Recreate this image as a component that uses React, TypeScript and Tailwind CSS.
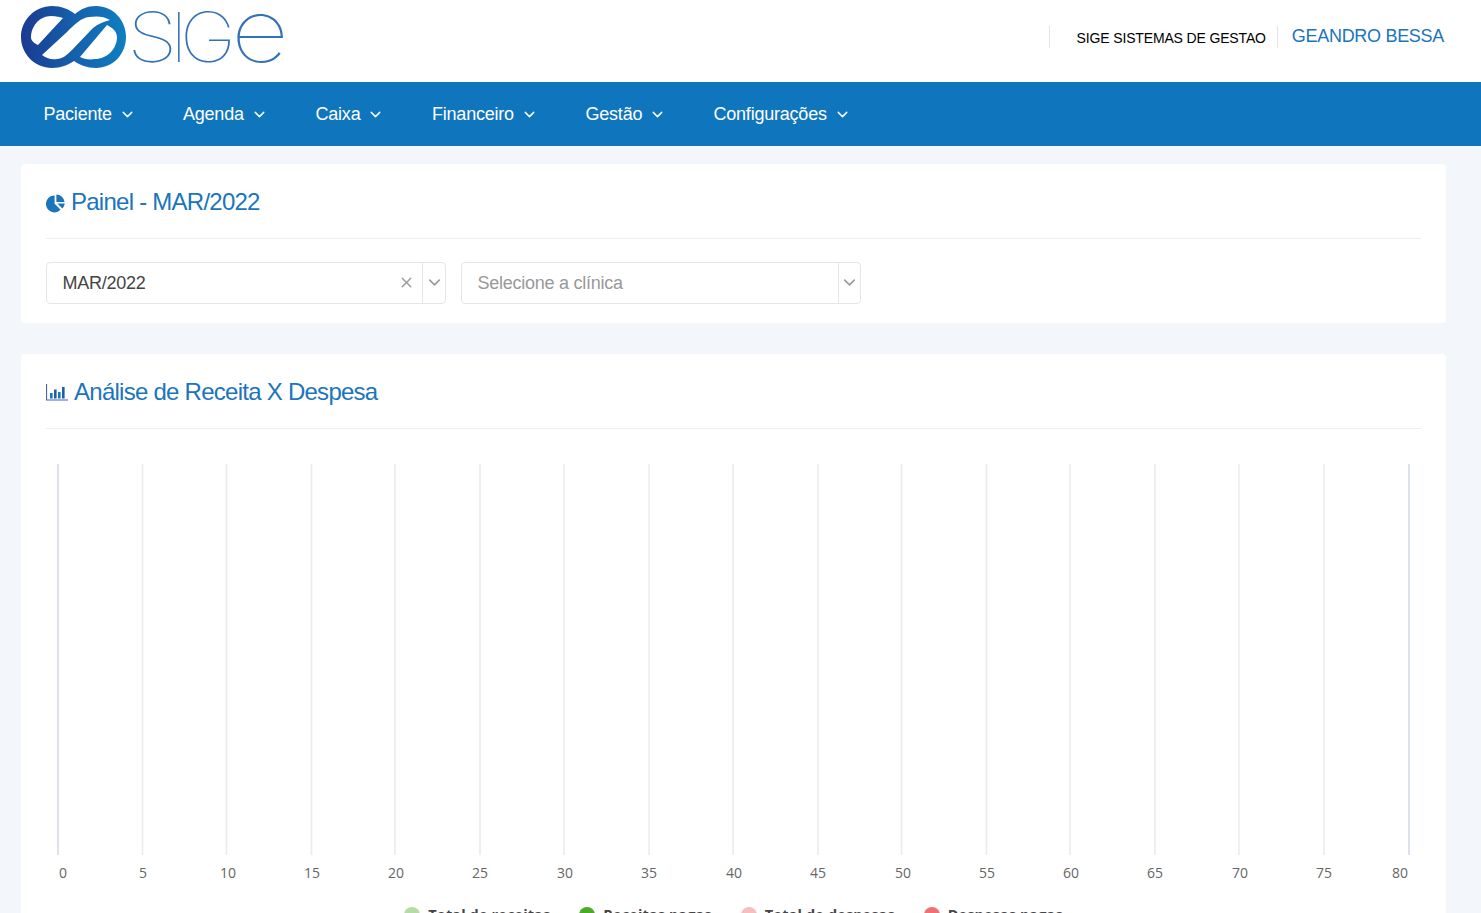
import { ChevronDown, X } from 'lucide-react'

const menuItems = [
  { label: 'Paciente', width: 'w-[139.5px]' },
  { label: 'Agenda', width: 'w-[132.5px]' },
  { label: 'Caixa', width: 'w-[116.5px]' },
  { label: 'Financeiro', width: 'w-[153.5px]' },
  { label: 'Gestão', width: 'w-[128px]' },
  { label: 'Configurações', width: 'w-[160px]' }
]

const gridLines = [58, 142.5, 226.5, 311.5, 395, 480, 564, 649, 733, 818, 901.5, 986.5, 1070, 1155, 1239, 1324, 1409]
const tickLabels = [63, 143, 228, 312, 396, 480, 565, 649, 734, 818, 903, 987, 1071, 1155, 1240, 1324, 1400]

const legend = [
  { label: 'Total de receitas', color: 'bg-[#b5dca5]' },
  { label: 'Receitas pagas', color: 'bg-[#4aab26]' },
  { label: 'Total de despesas', color: 'bg-[#f5bfc0]' },
  { label: 'Despesas pagas', color: 'bg-[#f07172]' }
]

function LogoMark() {
  return (
    <svg width="106" height="64" viewBox="0 0 106 64" fill="none" className="shrink-0">
      <defs>
        <linearGradient id="logoGrad" x1="0" y1="0" x2="106" y2="0" gradientUnits="userSpaceOnUse">
          <stop offset="0" stopColor="#1b3a90" />
          <stop offset="0.5" stopColor="#1560ac" />
          <stop offset="1" stopColor="#0f7fc2" />
        </linearGradient>
      </defs>
      <path
        fill="url(#logoGrad)"
        d="M31 1 C40 1 48 4 54 9 C60 4 66 1 75 1 C92 1 105 15 105 32 C105 49 92 63 75 63 C66 63 59 60 53 56 C47 60 40 63 31 63 C14 63 0 49 0 32 C0 15 14 1 31 1 Z"
      />
      <path fill="#fff" d="M10 32 C10 22 18 11 30 11 C35 11 39 12 42 13 L17 40 C13 38 10 36 10 32 Z" />
      <path
        fill="#fff"
        d="M21 50 L46 27 C54 19 60 13 68 12 C75 11 83 11 89 15 C82 17 77 19 72 23 L51 45 C46 50 41 54 36 54 C30 55 25 53 21 50 Z"
      />
      <path fill="#fff" d="M59 52 L86 20 C92 23 96 27 96 32 C96 44 86 54 74 54 C68 55 63 54 59 52 Z" />
    </svg>
  )
}

function PieIcon() {
  return (
    <svg width="20" height="20" viewBox="0 0 20 20" className="mt-[2px] shrink-0 text-[#1a75bc]" fill="currentColor">
      <path d="M8.6 2.4 V10.8 L14.6 16.8 A8.5 8.5 0 1 1 8.6 2.4 Z" />
      <path d="M10.4 1.6 A8.4 8.4 0 0 1 18.6 9 L10.4 9 Z" />
      <path d="M11.4 10.6 L18.8 10.6 A8.4 8.4 0 0 1 16.4 15.6 Z" />
    </svg>
  )
}

function BarsIcon() {
  return (
    <svg width="22" height="17" viewBox="0 0 22 17" className="mt-[1px] shrink-0" fill="none">
      <path d="M0.5 0 V16 H22" stroke="#4a62b8" strokeWidth="1.2" />
      <rect x="4" y="9" width="2.6" height="5.5" fill="#1a75bc" />
      <rect x="8" y="5.5" width="2.6" height="9" fill="#1a5fa8" />
      <rect x="12" y="8" width="2.6" height="6.5" fill="#1a75bc" />
      <rect x="16" y="3" width="2.6" height="11.5" fill="#1a5fa8" />
    </svg>
  )
}

function ChartGrid() {
  return (
    <svg width="1425" height="432" viewBox="21 456 1425 432" className="block -mx-[25px]">
      {gridLines.map((x, i) => (
        <line
          key={x}
          x1={x}
          x2={x}
          y1={464}
          y2={855}
          stroke={i === 0 || i === gridLines.length - 1 ? '#d5daea' : '#e9ebf0'}
          strokeWidth="1.6"
        />
      ))}
      {tickLabels.map((x, i) => (
        <text
          key={x}
          x={x}
          y={878}
          textAnchor="middle"
          fontSize="14"
          fill="#666666"
          fontFamily="'Open Sans', sans-serif"
        >
          {i * 5}
        </text>
      ))}
    </svg>
  )
}

function SelectBox({ value, placeholder, clearable }: { value?: string; placeholder?: string; clearable?: boolean }) {
  return (
    <div className="flex h-[42px] w-[400px] items-stretch rounded border border-[#e4e6ea] bg-white">
      <div
        className={`flex flex-1 items-center pl-[15.5px] text-[18px] tracking-[-0.25px] ${
          value ? 'text-[#444444]' : 'text-[#999999]'
        }`}
      >
        {value ?? placeholder}
      </div>
      {clearable && (
        <div className="flex w-[31px] items-center justify-center pb-[2px]">
          <X className="h-[17px] w-[17px] text-[#9a9a9a]" strokeWidth={2} />
        </div>
      )}
      <div
        className={`flex items-center justify-center border-l border-[#e4e6ea] pb-[2px] ${
          clearable ? 'w-[23px]' : 'w-[22px]'
        }`}
      >
        <ChevronDown className="h-[19px] w-[19px] text-[#9a9a9a]" strokeWidth={2} />
      </div>
    </div>
  )
}

export default function App() {
  return (
    <div className="h-[913px] overflow-hidden bg-[#f3f6fb] font-['Liberation_Sans',Arial,sans-serif]">
      <header className="flex h-[82px] items-start justify-between bg-white pl-[21px] pr-[37px]">
        <div className="flex items-start pt-[5px]">
          <LogoMark />
          <div className="-mt-[7px] flex h-[64px] items-baseline font-['Inter',sans-serif] font-thin leading-[64px] text-[#3471bb]">
            <span className="inline-block origin-left scale-x-[1.2] text-[69px]">S</span>
            <span className="-mr-[7px] ml-[1px] inline-block text-[69px]">I</span>
            <span className="inline-block origin-left scale-x-[1.1] text-[69px]">G</span>
            <span className="inline-block origin-left scale-x-[1.15] text-[88px]">e</span>
          </div>
        </div>
        <div className="flex items-center pt-[26px]">
          <div className="flex h-[22px] items-center border-l border-[#e3e3e3] pl-[27px] pr-[11px] pt-[3px] text-[14px] tracking-[-0.15px] text-black">
            SIGE SISTEMAS DE GESTAO
          </div>
          <div className="flex h-[22px] items-center border-l border-[#e3e3e3] pb-[1px] pl-[14px] text-[18px] tracking-[-0.3px] text-[#1a75bc]">
            GEANDRO BESSA
          </div>
        </div>
      </header>

      <nav className="flex h-[64px] items-center bg-[#0f75bc] pl-[43.5px]">
        {menuItems.map(item => (
          <div key={item.label} className={`flex items-center text-[18px] tracking-[-0.22px] text-white ${item.width}`}>
            {item.label}
            <ChevronDown className="ml-[7px] h-[17px] w-[17px]" strokeWidth={2} />
          </div>
        ))}
      </nav>

      <main className="flex flex-col gap-[31px] pl-[21px] pr-[35px] pt-[18px]">
        <section className="h-[159px] rounded bg-white px-[25px]">
          <div className="flex h-[75px] items-center gap-[5px] border-b border-[#eceef2] pt-[2px] text-[24px] tracking-[-0.75px] text-[#1a75bc]">
            <PieIcon />
            Painel - MAR/2022
          </div>
          <div className="flex gap-[15px] pt-[23px]">
            <SelectBox value="MAR/2022" clearable />
            <SelectBox placeholder="Selecione a clínica" />
          </div>
        </section>

        <section className="rounded bg-white px-[25px]">
          <div className="flex h-[75px] items-center gap-[6px] border-b border-[#eceef2] pt-[2px] text-[24px] tracking-[-0.74px] text-[#1a75bc]">
            <BarsIcon />
            Análise de Receita X Despesa
          </div>
          <div className="pt-[27px]">
            <ChartGrid />
          </div>
          <div className="flex justify-center gap-[29px] pt-[16px] font-['Open_Sans',sans-serif] text-[14.5px] font-bold leading-[20px] tracking-[0.12px] text-[#444444]">
            {legend.map(entry => (
              <div key={entry.label} className="flex items-center gap-[8px]">
                <span className={`h-[16px] w-[16px] rounded-full ${entry.color}`} />
                <span className="pt-[1px]">{entry.label}</span>
              </div>
            ))}
          </div>
        </section>
      </main>
    </div>
  )
}
